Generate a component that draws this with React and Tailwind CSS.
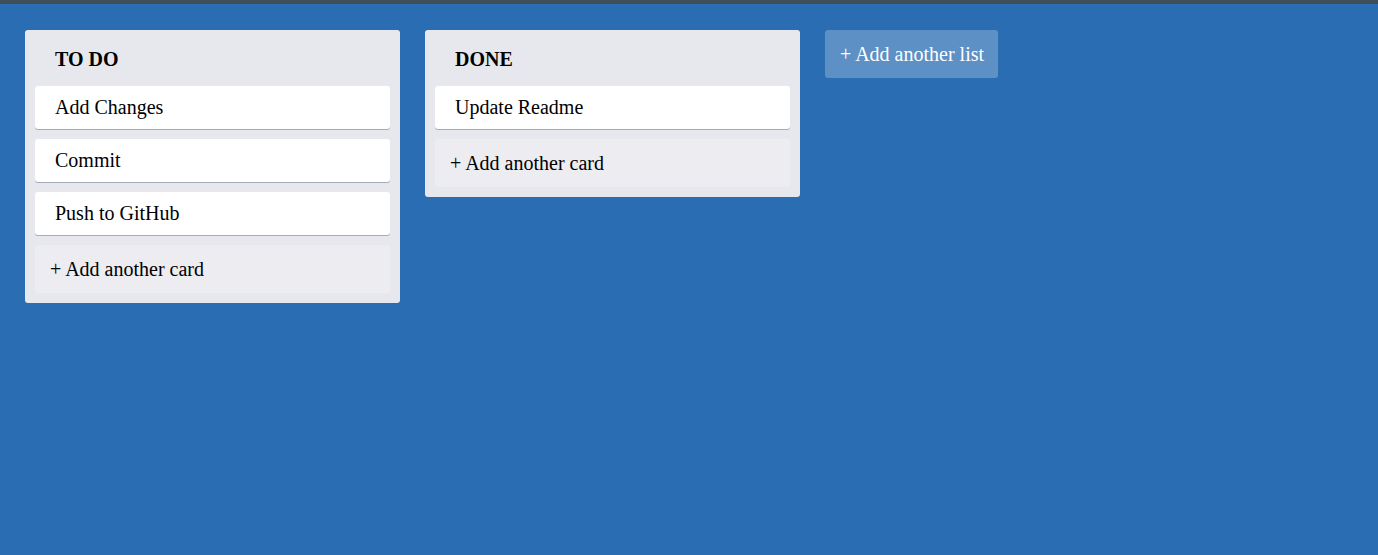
export default function App() {
  const lists = [
    { title: "TO DO", cards: ["Add Changes", "Commit", "Push to GitHub"] },
    { title: "DONE", cards: ["Update Readme"] },
  ];
  return (
    <div className="min-h-[555px] bg-[#2b6db2] text-black" style={{ fontFamily: '"Liberation Serif", serif' }}>
      <div className="h-[4px] bg-[#3e4f5a]" />
      <div className="flex items-start gap-[25px] pl-[25px] pt-[26px]">
        {lists.map((l) => (
          <div key={l.title} className="w-[375px] rounded-[3px] bg-[#e7e8ed] px-[10px] pb-[10px]">
            <div className="h-[56px] pl-[20px] pt-[17px] text-[20px] font-bold leading-[24px]">{l.title}</div>
            <div className="flex flex-col gap-[10px]">
              {l.cards.map((c) => (
                <div key={c} className="h-[43px] rounded-[3px] bg-white pl-[20px] pt-[9px] text-[20px] leading-[24px] shadow-[0_1px_0_rgba(9,30,66,0.3)]">
                  {c}
                </div>
              ))}
              <div className="h-[48px] rounded-[3px] bg-[#ececf1] pl-[15px] pt-[12px] text-[20px] leading-[24px]">+ Add another card</div>
            </div>
          </div>
        ))}
        <div className="h-[48px] w-[173px] rounded-[3px] bg-[rgba(255,255,255,0.24)] pl-[15px] pt-[12px] text-[20px] leading-[24px] text-white">
          + Add another list
        </div>
      </div>
    </div>
  );
}
